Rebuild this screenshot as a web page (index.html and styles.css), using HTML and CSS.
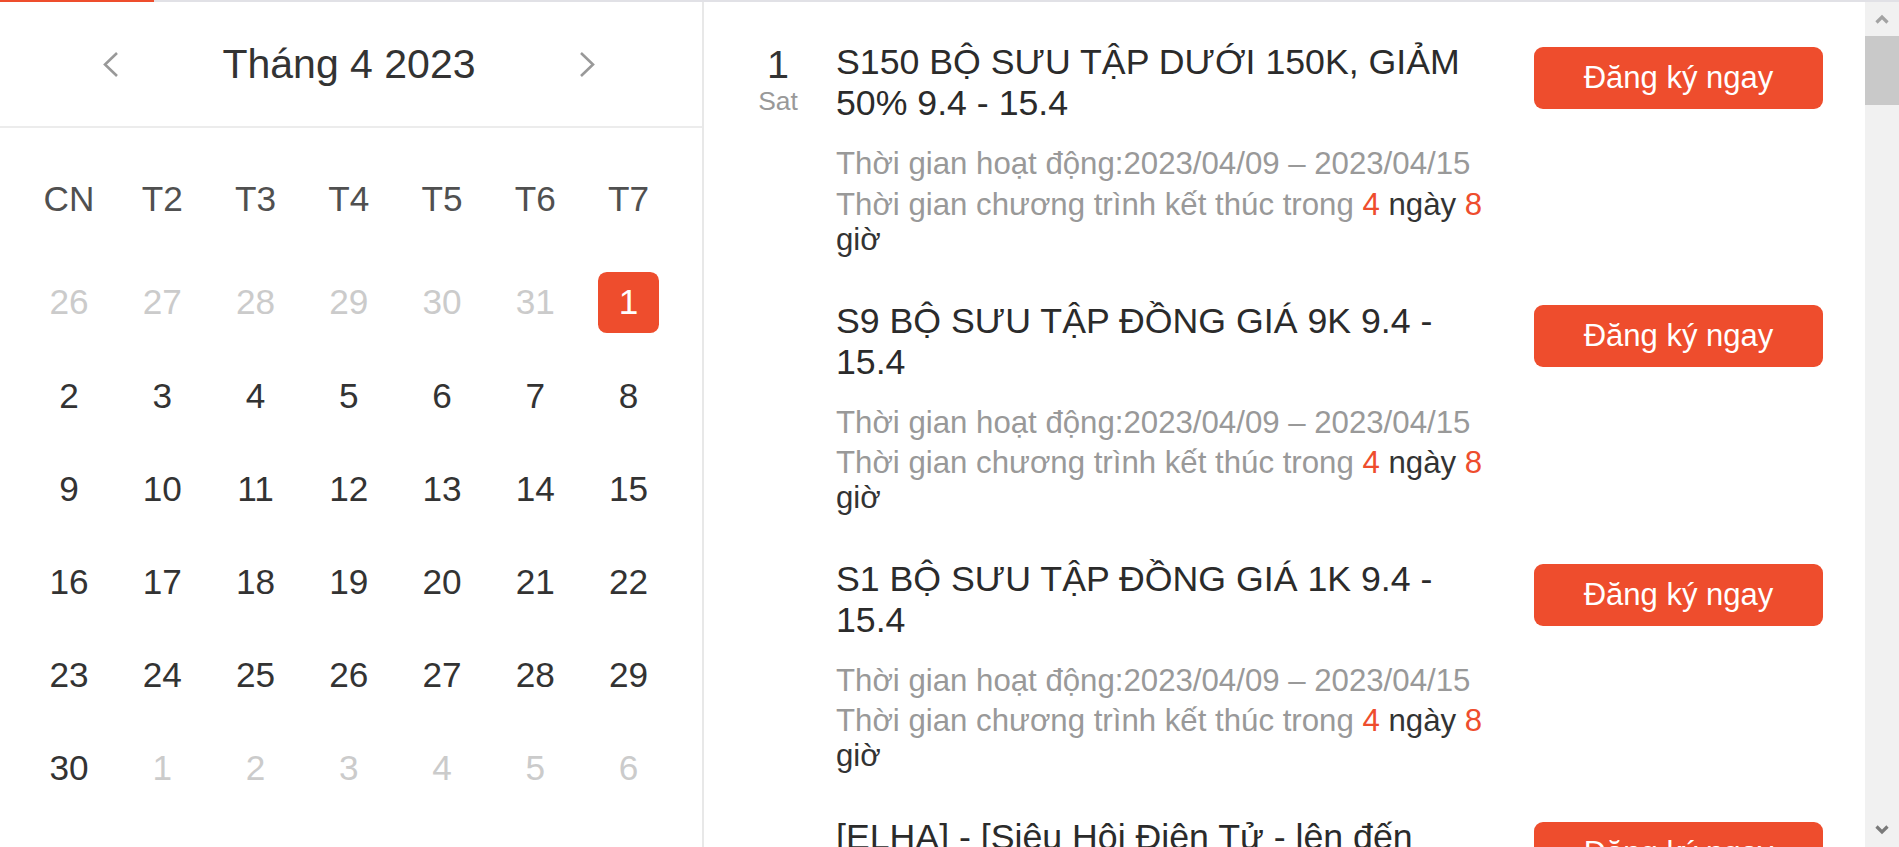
FILE: index.html
```html
<!DOCTYPE html>
<html lang="vi">
<head>
<meta charset="utf-8">
<title>Lịch chương trình</title>
<link rel="stylesheet" href="styles.css">
</head>
<body>
<div class="app">
  <div class="topbar"><div class="topbar-active"></div></div>
  <div class="main">
    <section class="calendar">
      <div class="cal-header">
        <button class="nav" aria-label="Tháng trước">
          <svg width="17" height="27" viewBox="0 0 17 27"><polyline points="15,2 3,13.5 15,25" fill="none" stroke="#999" stroke-width="2.6"/></svg>
        </button>
        <div class="cal-title">Tháng 4 2023</div>
        <button class="nav" aria-label="Tháng sau">
          <svg width="17" height="27" viewBox="0 0 17 27"><polyline points="2,2 14,13.5 2,25" fill="none" stroke="#999" stroke-width="2.6"/></svg>
        </button>
      </div>
      <div class="cal-body">
        <div class="weekdays">
          <div class="wd">CN</div><div class="wd">T2</div><div class="wd">T3</div><div class="wd">T4</div><div class="wd">T5</div><div class="wd">T6</div><div class="wd">T7</div>
        </div>
        <div class="days">
          <div class="day muted">26</div><div class="day muted">27</div><div class="day muted">28</div><div class="day muted">29</div><div class="day muted">30</div><div class="day muted">31</div><div class="day"><span class="selected">1</span></div>
          <div class="day">2</div><div class="day">3</div><div class="day">4</div><div class="day">5</div><div class="day">6</div><div class="day">7</div><div class="day">8</div>
          <div class="day">9</div><div class="day">10</div><div class="day">11</div><div class="day">12</div><div class="day">13</div><div class="day">14</div><div class="day">15</div>
          <div class="day">16</div><div class="day">17</div><div class="day">18</div><div class="day">19</div><div class="day">20</div><div class="day">21</div><div class="day">22</div>
          <div class="day">23</div><div class="day">24</div><div class="day">25</div><div class="day">26</div><div class="day">27</div><div class="day">28</div><div class="day">29</div>
          <div class="day">30</div><div class="day muted">1</div><div class="day muted">2</div><div class="day muted">3</div><div class="day muted">4</div><div class="day muted">5</div><div class="day muted">6</div>
        </div>
      </div>
    </section>
    <section class="events">
      <div class="event-list">
        <div class="event">
          <div class="event-date"><div class="date-num">1</div><div class="date-dow">Sat</div></div>
          <div class="event-body">
            <div class="event-title">S150 BỘ SƯU TẬP DƯỚI 150K, GIẢM 50% 9.4 - 15.4</div>
            <div class="event-time">Thời gian hoạt động:2023/04/09 – 2023/04/15</div>
            <div class="event-countdown">Thời gian chương trình kết thúc trong <span class="hl">4</span> <span class="dark">ngày</span> <span class="hl">8</span> <span class="dark">giờ</span></div>
          </div>
          <div class="event-action"><button class="btn">Đăng ký ngay</button></div>
        </div>
        <div class="event">
          <div class="event-date"></div>
          <div class="event-body">
            <div class="event-title">S9 BỘ SƯU TẬP ĐỒNG GIÁ 9K 9.4 - 15.4</div>
            <div class="event-time">Thời gian hoạt động:2023/04/09 – 2023/04/15</div>
            <div class="event-countdown">Thời gian chương trình kết thúc trong <span class="hl">4</span> <span class="dark">ngày</span> <span class="hl">8</span> <span class="dark">giờ</span></div>
          </div>
          <div class="event-action"><button class="btn">Đăng ký ngay</button></div>
        </div>
        <div class="event">
          <div class="event-date"></div>
          <div class="event-body">
            <div class="event-title">S1 BỘ SƯU TẬP ĐỒNG GIÁ 1K 9.4 - 15.4</div>
            <div class="event-time">Thời gian hoạt động:2023/04/09 – 2023/04/15</div>
            <div class="event-countdown">Thời gian chương trình kết thúc trong <span class="hl">4</span> <span class="dark">ngày</span> <span class="hl">8</span> <span class="dark">giờ</span></div>
          </div>
          <div class="event-action"><button class="btn">Đăng ký ngay</button></div>
        </div>
        <div class="event">
          <div class="event-date"></div>
          <div class="event-body">
            <div class="event-title">[ELHA] - [Siêu Hội Điện Tử - lên đến 1.000.000Đ] 9.4 - 15.4</div>
            <div class="event-time">Thời gian hoạt động:2023/04/09 – 2023/04/15</div>
            <div class="event-countdown">Thời gian chương trình kết thúc trong <span class="hl">4</span> <span class="dark">ngày</span> <span class="hl">8</span> <span class="dark">giờ</span></div>
          </div>
          <div class="event-action"><button class="btn">Đăng ký ngay</button></div>
        </div>
      </div>
      <div class="scrollbar">
        <div class="sb-btn"><svg width="14" height="10" viewBox="0 0 14 10"><polyline points="1.5,8.5 7,3 12.5,8.5" fill="none" stroke="#a3a3a3" stroke-width="3.2"/></svg></div>
        <div class="sb-thumb"></div>
        <div class="sb-space"></div>
        <div class="sb-btn"><svg width="14" height="10" viewBox="0 0 14 10"><polyline points="1.5,1.5 7,7 12.5,1.5" fill="none" stroke="#7a7a7a" stroke-width="3.2"/></svg></div>
      </div>
    </section>
  </div>
</div>
</body>
</html>
```

FILE: styles.css
```css
html, body {
  margin: 0;
  padding: 0;
  height: 847px;
  overflow: hidden;
  background: #fff;
}

body {
  font-family: "Liberation Sans", Arial, sans-serif;
  color: #333;
}

.app {
  height: 847px;
  display: flex;
  flex-direction: column;
}

.topbar {
  height: 2px;
  flex-shrink: 0;
  background: #e1e1e6;
}

.topbar-active {
  width: 154px;
  height: 100%;
  background: #ee4d2d;
}

.main {
  flex: 1;
  min-height: 0;
  display: flex;
}

/* Calendar */
.calendar {
  width: 702px;
  flex-shrink: 0;
  border-right: 2px solid #e8e8e8;
}

.cal-header {
  height: 124px;
  display: flex;
  align-items: center;
  justify-content: space-between;
  padding: 0 106px 0 102px;
  border-bottom: 2px solid #ececec;
}

.nav {
  width: 17px;
  height: 27px;
  padding: 0;
  border: 0;
  background: none;
  display: flex;
}

.cal-title {
  font-size: 41px;
  color: #333;
}

.cal-body {
  padding: 24.8px 26.85px 0 22.4px;
}

.weekdays {
  display: grid;
  grid-template-columns: repeat(7, 1fr);
  height: 93.2px;
  align-items: center;
  margin-bottom: 9.8px;
}

.wd {
  text-align: center;
  font-size: 35.2px;
  color: #505050;
}

.days {
  display: grid;
  grid-template-columns: repeat(7, 1fr);
  grid-auto-rows: 93.2px;
}

.day {
  display: flex;
  align-items: center;
  justify-content: center;
  font-size: 35.2px;
  color: #333;
}

.day.muted {
  color: #cbcbcb;
}

.selected {
  width: 61.6px;
  height: 61.6px;
  border-radius: 8.8px;
  background: #ee4d2d;
  color: #fff;
  display: flex;
  align-items: center;
  justify-content: center;
}

/* Events */
.events {
  flex: 1;
  min-width: 0;
  display: flex;
}

.event-list {
  flex: 1;
  min-width: 0;
  overflow: hidden;
  padding: 40.3px 42px 0 30px;
}

.event {
  display: flex;
  padding-bottom: 43.8px;
}

.event-date {
  width: 88px;
  flex-shrink: 0;
  text-align: center;
}

.date-num {
  font-size: 39.6px;
  line-height: 44px;
  color: #333;
}

.date-dow {
  font-size: 26.4px;
  line-height: 30px;
  color: #999;
}

.event-body {
  width: 660px;
  flex-shrink: 0;
  margin-left: 14px;
}

.event-title {
  font-size: 35.7px;
  line-height: 41px;
  color: #2b2b2b;
  margin-bottom: 20px;
}

.event-time {
  font-size: 31.2px;
  line-height: 40px;
  color: #999;
}

.event-countdown {
  font-size: 31.2px;
  line-height: 35px;
  margin-top: 2.5px;
  color: #999;
}

.hl {
  color: #ee4d2d;
}

.dark {
  color: #333;
}

.event-action {
  margin-left: 38px;
  padding-top: 4.7px;
  flex-shrink: 0;
}

.btn {
  width: 289px;
  height: 62px;
  border: 0;
  border-radius: 9px;
  background: #ee4d2d;
  color: #fff;
  font-family: inherit;
  font-size: 31px;
  padding: 0;
}

/* Scrollbar */
.scrollbar {
  width: 34px;
  flex-shrink: 0;
  background: #f1f1f1;
  display: flex;
  flex-direction: column;
}

.sb-btn {
  height: 34px;
  display: flex;
  align-items: center;
  justify-content: center;
}

.sb-thumb {
  height: 69px;
  background: #c9c9c9;
}

.sb-space {
  flex: 1;
}
```
